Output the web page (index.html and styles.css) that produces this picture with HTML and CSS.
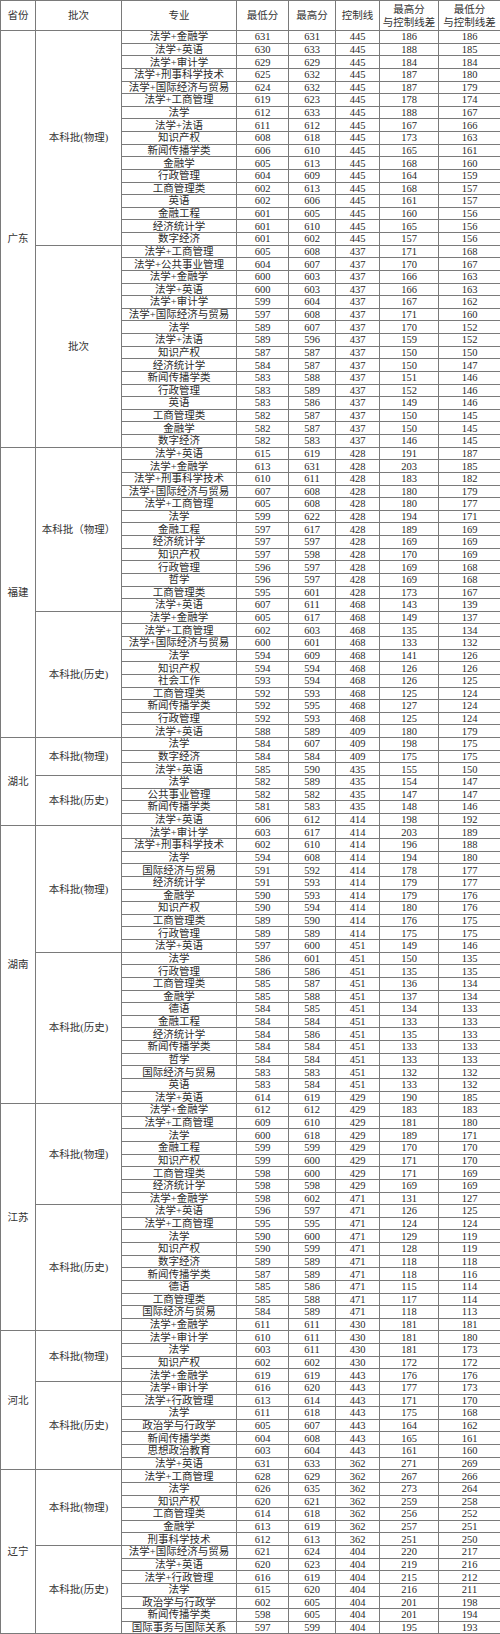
FILE: index.html
```html
<!DOCTYPE html>
<html lang="zh">
<head>
<meta charset="utf-8">
<title>录取分数</title>
<link rel="stylesheet" href="styles.css">
</head>
<body>
<table class="scores">
<colgroup>
<col class="c-prov"><col class="c-batch"><col class="c-major"><col class="c-n1"><col class="c-n2"><col class="c-n3"><col class="c-n4"><col class="c-n5">
</colgroup>
<thead>
<tr><th>省份</th><th>批次</th><th>专业</th><th>最低分</th><th>最高分</th><th>控制线</th><th>最高分<br>与控制线差</th><th>最低分<br>与控制线差</th></tr>
</thead>
<tbody>
<tr><td class="prov" rowspan="33">广东</td><td class="batch" rowspan="17">本科批(物理)</td><td>法学+金融学</td><td>631</td><td>631</td><td>445</td><td>186</td><td>186</td></tr>
<tr><td>法学+英语</td><td>630</td><td>633</td><td>445</td><td>188</td><td>185</td></tr>
<tr><td>法学+审计学</td><td>629</td><td>629</td><td>445</td><td>184</td><td>184</td></tr>
<tr><td>法学+刑事科学技术</td><td>625</td><td>632</td><td>445</td><td>187</td><td>180</td></tr>
<tr><td>法学+国际经济与贸易</td><td>624</td><td>632</td><td>445</td><td>187</td><td>179</td></tr>
<tr><td>法学+工商管理</td><td>619</td><td>623</td><td>445</td><td>178</td><td>174</td></tr>
<tr><td>法学</td><td>612</td><td>633</td><td>445</td><td>188</td><td>167</td></tr>
<tr><td>法学+法语</td><td>611</td><td>612</td><td>445</td><td>167</td><td>166</td></tr>
<tr><td>知识产权</td><td>608</td><td>618</td><td>445</td><td>173</td><td>163</td></tr>
<tr><td>新闻传播学类</td><td>606</td><td>610</td><td>445</td><td>165</td><td>161</td></tr>
<tr><td>金融学</td><td>605</td><td>613</td><td>445</td><td>168</td><td>160</td></tr>
<tr><td>行政管理</td><td>604</td><td>609</td><td>445</td><td>164</td><td>159</td></tr>
<tr><td>工商管理类</td><td>602</td><td>613</td><td>445</td><td>168</td><td>157</td></tr>
<tr><td>英语</td><td>602</td><td>606</td><td>445</td><td>161</td><td>157</td></tr>
<tr><td>金融工程</td><td>601</td><td>605</td><td>445</td><td>160</td><td>156</td></tr>
<tr><td>经济统计学</td><td>601</td><td>610</td><td>445</td><td>165</td><td>156</td></tr>
<tr><td>数字经济</td><td>601</td><td>602</td><td>445</td><td>157</td><td>156</td></tr>
<tr><td class="batch" rowspan="16">批次</td><td>法学+工商管理</td><td>605</td><td>608</td><td>437</td><td>171</td><td>168</td></tr>
<tr><td>法学+公共事业管理</td><td>604</td><td>607</td><td>437</td><td>170</td><td>167</td></tr>
<tr><td>法学+金融学</td><td>600</td><td>603</td><td>437</td><td>166</td><td>163</td></tr>
<tr><td>法学+英语</td><td>600</td><td>603</td><td>437</td><td>166</td><td>163</td></tr>
<tr><td>法学+审计学</td><td>599</td><td>604</td><td>437</td><td>167</td><td>162</td></tr>
<tr><td>法学+国际经济与贸易</td><td>597</td><td>608</td><td>437</td><td>171</td><td>160</td></tr>
<tr><td>法学</td><td>589</td><td>607</td><td>437</td><td>170</td><td>152</td></tr>
<tr><td>法学+法语</td><td>589</td><td>596</td><td>437</td><td>159</td><td>152</td></tr>
<tr><td>知识产权</td><td>587</td><td>587</td><td>437</td><td>150</td><td>150</td></tr>
<tr><td>经济统计学</td><td>584</td><td>587</td><td>437</td><td>150</td><td>147</td></tr>
<tr><td>新闻传播学类</td><td>583</td><td>588</td><td>437</td><td>151</td><td>146</td></tr>
<tr><td>行政管理</td><td>583</td><td>589</td><td>437</td><td>152</td><td>146</td></tr>
<tr><td>英语</td><td>583</td><td>586</td><td>437</td><td>149</td><td>146</td></tr>
<tr><td>工商管理类</td><td>582</td><td>587</td><td>437</td><td>150</td><td>145</td></tr>
<tr><td>金融学</td><td>582</td><td>587</td><td>437</td><td>150</td><td>145</td></tr>
<tr><td>数字经济</td><td>582</td><td>583</td><td>437</td><td>146</td><td>145</td></tr>
<tr><td class="prov" rowspan="23">福建</td><td class="batch" rowspan="13">本科批（物理）</td><td>法学+英语</td><td>615</td><td>619</td><td>428</td><td>191</td><td>187</td></tr>
<tr><td>法学+金融学</td><td>613</td><td>631</td><td>428</td><td>203</td><td>185</td></tr>
<tr><td>法学+刑事科学技术</td><td>610</td><td>611</td><td>428</td><td>183</td><td>182</td></tr>
<tr><td>法学+国际经济与贸易</td><td>607</td><td>608</td><td>428</td><td>180</td><td>179</td></tr>
<tr><td>法学+工商管理</td><td>605</td><td>608</td><td>428</td><td>180</td><td>177</td></tr>
<tr><td>法学</td><td>599</td><td>622</td><td>428</td><td>194</td><td>171</td></tr>
<tr><td>金融工程</td><td>597</td><td>617</td><td>428</td><td>189</td><td>169</td></tr>
<tr><td>经济统计学</td><td>597</td><td>597</td><td>428</td><td>169</td><td>169</td></tr>
<tr><td>知识产权</td><td>597</td><td>598</td><td>428</td><td>170</td><td>169</td></tr>
<tr><td>行政管理</td><td>596</td><td>597</td><td>428</td><td>169</td><td>168</td></tr>
<tr><td>哲学</td><td>596</td><td>597</td><td>428</td><td>169</td><td>168</td></tr>
<tr><td>工商管理类</td><td>595</td><td>601</td><td>428</td><td>173</td><td>167</td></tr>
<tr><td>法学+英语</td><td>607</td><td>611</td><td>468</td><td>143</td><td>139</td></tr>
<tr><td class="batch" rowspan="10">本科批(历史)</td><td>法学+金融学</td><td>605</td><td>617</td><td>468</td><td>149</td><td>137</td></tr>
<tr><td>法学+工商管理</td><td>602</td><td>603</td><td>468</td><td>135</td><td>134</td></tr>
<tr><td>法学+国际经济与贸易</td><td>600</td><td>601</td><td>468</td><td>133</td><td>132</td></tr>
<tr><td>法学</td><td>594</td><td>609</td><td>468</td><td>141</td><td>126</td></tr>
<tr><td>知识产权</td><td>594</td><td>594</td><td>468</td><td>126</td><td>126</td></tr>
<tr><td>社会工作</td><td>593</td><td>594</td><td>468</td><td>126</td><td>125</td></tr>
<tr><td>工商管理类</td><td>592</td><td>593</td><td>468</td><td>125</td><td>124</td></tr>
<tr><td>新闻传播学类</td><td>592</td><td>595</td><td>468</td><td>127</td><td>124</td></tr>
<tr><td>行政管理</td><td>592</td><td>593</td><td>468</td><td>125</td><td>124</td></tr>
<tr><td>法学+英语</td><td>588</td><td>589</td><td>409</td><td>180</td><td>179</td></tr>
<tr><td class="prov" rowspan="7">湖北</td><td class="batch" rowspan="3">本科批(物理)</td><td>法学</td><td>584</td><td>607</td><td>409</td><td>198</td><td>175</td></tr>
<tr><td>数字经济</td><td>584</td><td>584</td><td>409</td><td>175</td><td>175</td></tr>
<tr><td>法学+英语</td><td>585</td><td>590</td><td>435</td><td>155</td><td>150</td></tr>
<tr><td class="batch" rowspan="4">本科批(历史)</td><td>法学</td><td>582</td><td>589</td><td>435</td><td>154</td><td>147</td></tr>
<tr><td>公共事业管理</td><td>582</td><td>582</td><td>435</td><td>147</td><td>147</td></tr>
<tr><td>新闻传播学类</td><td>581</td><td>583</td><td>435</td><td>148</td><td>146</td></tr>
<tr><td>法学+英语</td><td>606</td><td>612</td><td>414</td><td>198</td><td>192</td></tr>
<tr><td class="prov" rowspan="22">湖南</td><td class="batch" rowspan="10">本科批(物理)</td><td>法学+审计学</td><td>603</td><td>617</td><td>414</td><td>203</td><td>189</td></tr>
<tr><td>法学+刑事科学技术</td><td>602</td><td>610</td><td>414</td><td>196</td><td>188</td></tr>
<tr><td>法学</td><td>594</td><td>608</td><td>414</td><td>194</td><td>180</td></tr>
<tr><td>国际经济与贸易</td><td>591</td><td>592</td><td>414</td><td>178</td><td>177</td></tr>
<tr><td>经济统计学</td><td>591</td><td>593</td><td>414</td><td>179</td><td>177</td></tr>
<tr><td>金融学</td><td>590</td><td>593</td><td>414</td><td>179</td><td>176</td></tr>
<tr><td>知识产权</td><td>590</td><td>594</td><td>414</td><td>180</td><td>176</td></tr>
<tr><td>工商管理类</td><td>589</td><td>590</td><td>414</td><td>176</td><td>175</td></tr>
<tr><td>行政管理</td><td>589</td><td>589</td><td>414</td><td>175</td><td>175</td></tr>
<tr><td>法学+英语</td><td>597</td><td>600</td><td>451</td><td>149</td><td>146</td></tr>
<tr><td class="batch" rowspan="12">本科批(历史)</td><td>法学</td><td>586</td><td>601</td><td>451</td><td>150</td><td>135</td></tr>
<tr><td>行政管理</td><td>586</td><td>586</td><td>451</td><td>135</td><td>135</td></tr>
<tr><td>工商管理类</td><td>585</td><td>587</td><td>451</td><td>136</td><td>134</td></tr>
<tr><td>金融学</td><td>585</td><td>588</td><td>451</td><td>137</td><td>134</td></tr>
<tr><td>德语</td><td>584</td><td>585</td><td>451</td><td>134</td><td>133</td></tr>
<tr><td>金融工程</td><td>584</td><td>584</td><td>451</td><td>133</td><td>133</td></tr>
<tr><td>经济统计学</td><td>584</td><td>586</td><td>451</td><td>135</td><td>133</td></tr>
<tr><td>新闻传播学类</td><td>584</td><td>584</td><td>451</td><td>133</td><td>133</td></tr>
<tr><td>哲学</td><td>584</td><td>584</td><td>451</td><td>133</td><td>133</td></tr>
<tr><td>国际经济与贸易</td><td>583</td><td>583</td><td>451</td><td>132</td><td>132</td></tr>
<tr><td>英语</td><td>583</td><td>584</td><td>451</td><td>133</td><td>132</td></tr>
<tr><td>法学+英语</td><td>614</td><td>619</td><td>429</td><td>190</td><td>185</td></tr>
<tr><td class="prov" rowspan="18">江苏</td><td class="batch" rowspan="8">本科批(物理)</td><td>法学+金融学</td><td>612</td><td>612</td><td>429</td><td>183</td><td>183</td></tr>
<tr><td>法学+工商管理</td><td>609</td><td>610</td><td>429</td><td>181</td><td>180</td></tr>
<tr><td>法学</td><td>600</td><td>618</td><td>429</td><td>189</td><td>171</td></tr>
<tr><td>金融工程</td><td>599</td><td>599</td><td>429</td><td>170</td><td>170</td></tr>
<tr><td>知识产权</td><td>599</td><td>600</td><td>429</td><td>171</td><td>170</td></tr>
<tr><td>工商管理类</td><td>598</td><td>600</td><td>429</td><td>171</td><td>169</td></tr>
<tr><td>经济统计学</td><td>598</td><td>598</td><td>429</td><td>169</td><td>169</td></tr>
<tr><td>法学+金融学</td><td>598</td><td>602</td><td>471</td><td>131</td><td>127</td></tr>
<tr><td class="batch" rowspan="10">本科批(历史)</td><td>法学+英语</td><td>596</td><td>597</td><td>471</td><td>126</td><td>125</td></tr>
<tr><td>法学+工商管理</td><td>595</td><td>595</td><td>471</td><td>124</td><td>124</td></tr>
<tr><td>法学</td><td>590</td><td>600</td><td>471</td><td>129</td><td>119</td></tr>
<tr><td>知识产权</td><td>590</td><td>599</td><td>471</td><td>128</td><td>119</td></tr>
<tr><td>数字经济</td><td>589</td><td>589</td><td>471</td><td>118</td><td>118</td></tr>
<tr><td>新闻传播学类</td><td>587</td><td>589</td><td>471</td><td>118</td><td>116</td></tr>
<tr><td>德语</td><td>585</td><td>586</td><td>471</td><td>115</td><td>114</td></tr>
<tr><td>工商管理类</td><td>585</td><td>588</td><td>471</td><td>117</td><td>114</td></tr>
<tr><td>国际经济与贸易</td><td>584</td><td>589</td><td>471</td><td>118</td><td>113</td></tr>
<tr><td>法学+金融学</td><td>611</td><td>611</td><td>430</td><td>181</td><td>181</td></tr>
<tr><td class="prov" rowspan="11">河北</td><td class="batch" rowspan="4">本科批(物理)</td><td>法学+审计学</td><td>610</td><td>611</td><td>430</td><td>181</td><td>180</td></tr>
<tr><td>法学</td><td>603</td><td>611</td><td>430</td><td>181</td><td>173</td></tr>
<tr><td>知识产权</td><td>602</td><td>602</td><td>430</td><td>172</td><td>172</td></tr>
<tr><td>法学+金融学</td><td>619</td><td>619</td><td>443</td><td>176</td><td>176</td></tr>
<tr><td class="batch" rowspan="7">本科批(历史)</td><td>法学+审计学</td><td>616</td><td>620</td><td>443</td><td>177</td><td>173</td></tr>
<tr><td>法学+行政管理</td><td>613</td><td>614</td><td>443</td><td>171</td><td>170</td></tr>
<tr><td>法学</td><td>611</td><td>618</td><td>443</td><td>175</td><td>168</td></tr>
<tr><td>政治学与行政学</td><td>605</td><td>607</td><td>443</td><td>164</td><td>162</td></tr>
<tr><td>新闻传播学类</td><td>604</td><td>608</td><td>443</td><td>165</td><td>161</td></tr>
<tr><td>思想政治教育</td><td>603</td><td>604</td><td>443</td><td>161</td><td>160</td></tr>
<tr><td>法学+英语</td><td>631</td><td>633</td><td>362</td><td>271</td><td>269</td></tr>
<tr><td class="prov" rowspan="13">辽宁</td><td class="batch" rowspan="6">本科批(物理)</td><td>法学+工商管理</td><td>628</td><td>629</td><td>362</td><td>267</td><td>266</td></tr>
<tr><td>法学</td><td>626</td><td>635</td><td>362</td><td>273</td><td>264</td></tr>
<tr><td>知识产权</td><td>620</td><td>621</td><td>362</td><td>259</td><td>258</td></tr>
<tr><td>工商管理类</td><td>614</td><td>618</td><td>362</td><td>256</td><td>252</td></tr>
<tr><td>金融学</td><td>613</td><td>619</td><td>362</td><td>257</td><td>251</td></tr>
<tr><td>刑事科学技术</td><td>612</td><td>613</td><td>362</td><td>251</td><td>250</td></tr>
<tr><td class="batch" rowspan="7">本科批(历史)</td><td>法学+国际经济与贸易</td><td>621</td><td>624</td><td>404</td><td>220</td><td>217</td></tr>
<tr><td>法学+英语</td><td>620</td><td>623</td><td>404</td><td>219</td><td>216</td></tr>
<tr><td>法学+行政管理</td><td>616</td><td>619</td><td>404</td><td>215</td><td>212</td></tr>
<tr><td>法学</td><td>615</td><td>620</td><td>404</td><td>216</td><td>211</td></tr>
<tr><td>政治学与行政学</td><td>602</td><td>605</td><td>404</td><td>201</td><td>198</td></tr>
<tr><td>新闻传播学类</td><td>598</td><td>605</td><td>404</td><td>201</td><td>194</td></tr>
<tr><td>国际事务与国际关系</td><td>597</td><td>599</td><td>404</td><td>195</td><td>193</td></tr>
</tbody>
</table>
</body>
</html>
```
FILE: styles.css
```css
html, body {
  margin: 0;
  padding: 0;
  background: #ffffff;
}

.scores {
  width: 500px;
  table-layout: fixed;
  border-collapse: collapse;
  font-family: "Liberation Serif", "Noto Sans CJK SC", serif;
  font-size: 10.5px;
  color: #2a2a2a;
}

.c-prov { width: 35px; }
.c-batch { width: 86px; }
.c-major { width: 115px; }
.c-n1 { width: 52px; }
.c-n2 { width: 47px; }
.c-n3 { width: 44px; }
.c-n4 { width: 59px; }
.c-n5 { width: 62px; }

.scores th,
.scores td {
  border: 1px solid #7a7a7a;
  padding: 0;
  text-align: center;
  vertical-align: middle;
  white-space: nowrap;
  overflow: hidden;
}

.scores th {
  font-weight: normal;
  line-height: 13px;
  color: #333333;
}

.scores thead tr {
  height: 30px;
}

.scores tbody tr {
  height: 12.63px;
}

.scores td {
  line-height: 11px;
}

.scores td.prov,
.scores td.batch {
  color: #333333;
}
```
